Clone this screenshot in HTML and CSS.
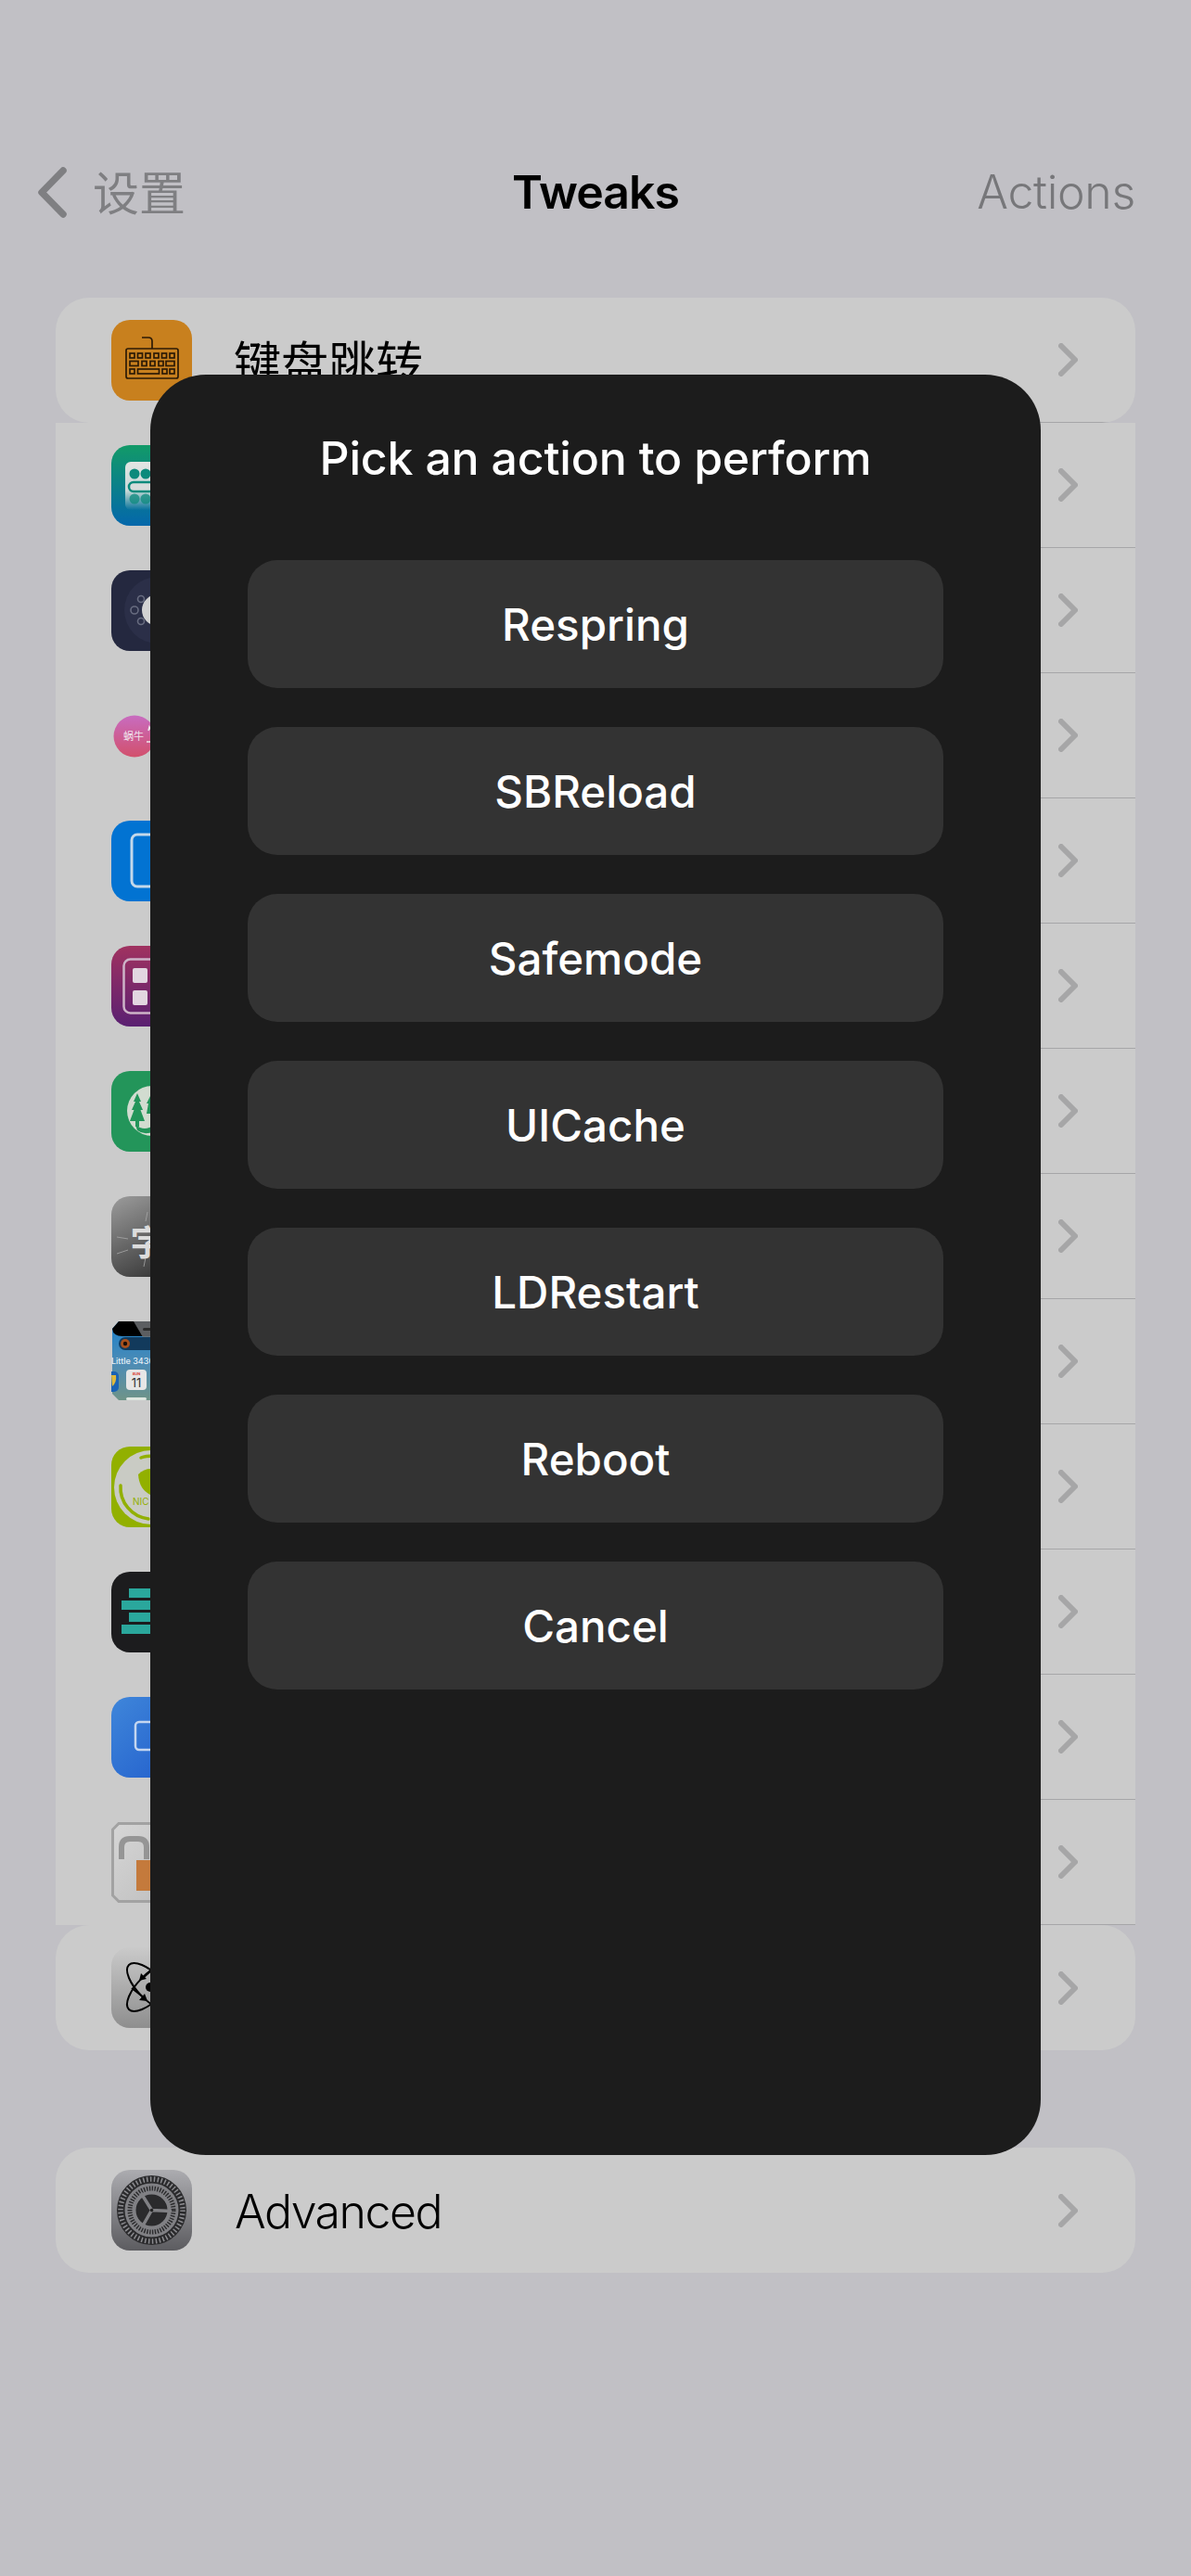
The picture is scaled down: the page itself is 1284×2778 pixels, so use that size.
FILE: index.html
```html
<!DOCTYPE html>
<html lang="zh">
<head>
  <meta charset="UTF-8" />
  <meta name="viewport" content="width=device-width, initial-scale=1.0"/>
  <title>Tweaks</title>
  <link rel="stylesheet" href="styles.css">
</head>
<body>

  <header class="nav">
    <div class="nav-back">
      <svg class="back-arrow" viewBox="0 0 33 57"><path d="M28 5 L5 28.500 L28 52" /></svg>
      <span class="nav-back-label">设置</span>
    </div>
    <h1 class="nav-title">Tweaks</h1>
    <div class="nav-action">Actions</div>
  </header>

  <main>
    <section class="group">

      <div class="row rounded">
        <svg class="icon" viewBox="0 0 87 87">
          <defs>
            <linearGradient id="g-teal" x1="0" y1="0" x2="0" y2="1"><stop offset="0" stop-color="#129a68"/><stop offset="1" stop-color="#0467ab"/></linearGradient>
            <linearGradient id="g-tile" x1="0" y1="0" x2="0" y2="1"><stop offset="0" stop-color="#e2e6e4"/><stop offset=".6" stop-color="#c8d8d8"/><stop offset="1" stop-color="#c8d8d8" stop-opacity="0"/></linearGradient>
            <linearGradient id="g-plum" x1="0" y1="0" x2="0" y2="1"><stop offset="0" stop-color="#a03260"/><stop offset="1" stop-color="#5a2072"/></linearGradient>
            <linearGradient id="g-snail" x1="0" y1="0" x2="0" y2="1"><stop offset="0" stop-color="#c86cc0"/><stop offset="1" stop-color="#d2506c"/></linearGradient>
            <linearGradient id="g-char" x1="0" y1="0" x2=".5" y2="1"><stop offset="0" stop-color="#9c9c9c"/><stop offset="1" stop-color="#3c3c3c"/></linearGradient>
            <linearGradient id="g-shot" x1="0" y1="0" x2="0" y2="1"><stop offset="0" stop-color="#1a80cc"/><stop offset=".55" stop-color="#4e8cb4"/><stop offset="1" stop-color="#6f9488"/></linearGradient>
            <linearGradient id="g-blue" x1="0" y1="0" x2="1" y2="1"><stop offset="0" stop-color="#3f86da"/><stop offset="1" stop-color="#205ccb"/></linearGradient>
            <linearGradient id="g-silver" x1="0" y1="0" x2="0" y2="1"><stop offset="0" stop-color="#cacaca"/><stop offset="1" stop-color="#8e8e8e"/></linearGradient>
            <linearGradient id="g-gear" x1="0" y1="0" x2="0" y2="1"><stop offset="0" stop-color="#acacb0"/><stop offset="1" stop-color="#5c5c60"/></linearGradient>
            <linearGradient id="g-lock" x1="0" y1="0" x2="1" y2="1"><stop offset="0" stop-color="#d6d6d6"/><stop offset="1" stop-color="#bcbcbc"/></linearGradient>
          </defs>
          <rect width="87" height="87" rx="20" fill="#c8801e"/>
          <g fill="none" stroke="#2c1a06" stroke-width="1.700">
            <path d="M33 19 H40 Q44 19 44 23 V31"/>
            <rect x="16" y="31" width="56" height="32" rx="2"/>
            <rect x="20" y="36" width="5" height="5"/><rect x="28.500" y="36" width="5" height="5"/><rect x="37" y="36" width="5" height="5"/><rect x="46" y="36" width="5" height="5"/><rect x="54.500" y="36" width="5" height="5"/><rect x="63" y="36" width="5" height="5"/>
            <rect x="20" y="44.500" width="9" height="5"/><rect x="33" y="44.500" width="5" height="5"/><rect x="42" y="44.500" width="5" height="5"/><rect x="51" y="44.500" width="5" height="5"/><rect x="59" y="44.500" width="9" height="5"/>
            <rect x="20" y="53" width="5" height="5"/><rect x="28.500" y="53" width="23" height="5"/><rect x="55" y="53" width="5" height="5"/><rect x="63" y="53" width="5" height="5"/>
          </g>
        </svg>
        <div class="row-body">
          <span class="row-label">键盘跳转</span>
          <svg class="chevron" viewBox="0 0 21 36"><path d="M3 3 L18 18 L3 33"/></svg>
        </div>
      </div>

      <div class="row">
        <svg class="icon" viewBox="0 0 87 87">
          <rect width="87" height="87" rx="20" fill="url(#g-teal)"/>
          <rect x="15" y="18" width="60" height="52" rx="6" fill="url(#g-tile)"/>
          <g fill="#0c8a7c">
            <circle cx="25" cy="31" r="5.500"/><circle cx="37" cy="31" r="5.500"/>
            <circle cx="25" cy="58" r="5.500" opacity=".75"/><circle cx="37" cy="58" r="5.500" opacity=".75"/>
          </g>
          <rect x="19" y="40" width="32" height="10" rx="5" fill="#d8dcdc" stroke="#0c8a7c" stroke-width="2.500"/>
        </svg>
        <div class="row-body"><svg class="chevron" viewBox="0 0 21 36"><path d="M3 3 L18 18 L3 33"/></svg></div>
      </div>

      <div class="row">
        <svg class="icon" viewBox="0 0 87 87">
          <rect width="87" height="87" rx="20" fill="#24283f"/>
          <circle cx="50" cy="43" r="36" fill="#2b2f48"/>
          <g fill="none" stroke="#686c80" stroke-width="1.600">
            <circle cx="25" cy="43" r="4"/><circle cx="32" cy="31" r="3.500"/><circle cx="32" cy="55" r="3.500"/>
          </g>
          <circle cx="50" cy="43" r="17" fill="#d2d2d2"/>
        </svg>
        <div class="row-body"><svg class="chevron" viewBox="0 0 21 36"><path d="M3 3 L18 18 L3 33"/></svg></div>
      </div>

      <div class="row">
        <svg class="icon" viewBox="0 0 87 87">
          <circle cx="25" cy="44" r="22.500" fill="url(#g-snail)"/>
          <text class="snail-text" x="24" y="48">蜗牛</text>
          <path d="M40 38 L41 34 L43 38 V50 H38" fill="none" stroke="#ececec" stroke-width="1.500"/>
        </svg>
        <div class="row-body"><svg class="chevron" viewBox="0 0 21 36"><path d="M3 3 L18 18 L3 33"/></svg></div>
      </div>

      <div class="row">
        <svg class="icon" viewBox="0 0 87 87">
          <rect width="87" height="87" rx="20" fill="#0273d2"/>
          <rect x="22" y="15" width="44" height="56" rx="6" fill="none" stroke="#c4d8ea" stroke-width="3"/>
        </svg>
        <div class="row-body"><svg class="chevron" viewBox="0 0 21 36"><path d="M3 3 L18 18 L3 33"/></svg></div>
      </div>

      <div class="row">
        <svg class="icon" viewBox="0 0 87 87">
          <rect width="87" height="87" rx="20" fill="url(#g-plum)"/>
          <rect x="13.500" y="14.500" width="60" height="58" rx="7" fill="none" stroke="#cdb4c8" stroke-width="2.500"/>
          <rect x="23" y="24" width="16" height="16" rx="2" fill="#e2d6e0"/>
          <rect x="23" y="48" width="16" height="16" rx="2" fill="#e2d6e0"/>
          <rect x="47" y="24" width="16" height="16" rx="2" fill="#e2d6e0"/>
          <rect x="47" y="48" width="16" height="16" rx="2" fill="#e2d6e0"/>
        </svg>
        <div class="row-body"><svg class="chevron" viewBox="0 0 21 36"><path d="M3 3 L18 18 L3 33"/></svg></div>
      </div>

      <div class="row">
        <svg class="icon" viewBox="0 0 87 87">
          <rect width="87" height="87" rx="20" fill="#23955a"/>
          <circle cx="44" cy="43" r="27" fill="#d2dcd0"/>
          <path d="M28 24 L32 33 L30 33 L34 42 L31.500 42 L36 54 L30 54 L30 60 L26 60 L26 54 L20 54 L24.500 42 L22 42 L26 33 L24 33 Z" fill="#23955a"/>
          <path d="M42 27 L46 35 L44 35 L48 46 L38 46 L40 35 L38 35 Z" fill="#23955a"/>
          <path d="M26 58 Q36 66 46 58 L46 65 Q36 70 28 64 Z" fill="#23955a"/>
        </svg>
        <div class="row-body"><svg class="chevron" viewBox="0 0 21 36"><path d="M3 3 L18 18 L3 33"/></svg></div>
      </div>

      <div class="row">
        <svg class="icon" viewBox="0 0 87 87">
          <rect width="87" height="87" rx="20" fill="url(#g-char)"/>
          <g stroke="#a8a8a8" stroke-width="1" opacity=".8">
            <line x1="6" y1="44" x2="18" y2="46"/><line x1="6" y1="62" x2="18" y2="58"/>
            <line x1="37" y1="27" x2="39" y2="17"/><line x1="35" y1="76" x2="37" y2="66"/>
          </g>
          <text class="char-text" x="39" y="64">字</text>
        </svg>
        <div class="row-body"><svg class="chevron" viewBox="0 0 21 36"><path d="M3 3 L18 18 L3 33"/></svg></div>
      </div>

      <div class="row">
        <svg class="icon" viewBox="0 0 87 87">
          <path d="M8 0 H79 L87 8 V78 L79 85 H8 L1 78 V8 Z" fill="url(#g-shot)"/>
          <path d="M1 8 L8 0 H58 V4 Q58 16 46 16 H12 Q2 16 1 8 Z" fill="#000"/>
          <path d="M24 0 H87 V34 H44 Z" fill="#6c6f72" opacity=".85"/>
          <rect x="34" y="7" width="20" height="3" rx="1.500" fill="#2a2a2a"/>
          <rect x="8" y="17" width="70" height="14" rx="7" fill="#123a5c"/>
          <circle cx="15" cy="24" r="5" fill="#a8501c"/>
          <circle cx="15" cy="24" r="2.200" fill="#1a0e08"/>
          <text class="shot-text" x="0" y="46">Little 3430</text>
          <rect x="-12" y="54" width="20" height="22" rx="5" fill="#1a62b4"/>
          <rect x="16" y="52" width="22" height="22" rx="4" fill="#e6e6e6"/>
          <text class="shot-sun" x="27" y="58">SUN</text>
          <text class="shot-day" x="27" y="71">11</text>
          <rect x="16" y="82" width="22" height="3" rx="1.500" fill="#dfe7e0"/>
          <path d="M0 58 L5 58 Q6 66 1 70 Z" fill="#e0b93c"/>
        </svg>
        <div class="row-body"><svg class="chevron" viewBox="0 0 21 36"><path d="M3 3 L18 18 L3 33"/></svg></div>
      </div>

      <div class="row">
        <svg class="icon" viewBox="0 0 87 87">
          <rect width="87" height="87" rx="20" fill="#92b000"/>
          <circle cx="43" cy="44" r="40" fill="#c9cbc4"/>
          <path d="M10 42 A34 34 0 0 0 40 78" fill="none" stroke="#92b000" stroke-width="3.500" stroke-linecap="round"/>
          <path d="M32 12 Q37 10 46 10" fill="none" stroke="#92b000" stroke-width="3.500" stroke-linecap="round"/>
          <path d="M29 30 Q40 20 52 27 Q54 44 42 52 Q30 46 29 30 Z" fill="#92b000"/>
          <text class="nic-text" x="23" y="63">NIC</text>
        </svg>
        <div class="row-body"><svg class="chevron" viewBox="0 0 21 36"><path d="M3 3 L18 18 L3 33"/></svg></div>
      </div>

      <div class="row">
        <svg class="icon" viewBox="0 0 87 87">
          <rect width="87" height="87" rx="20" fill="#1c1c1e"/>
          <g fill="#2aa79c">
            <rect x="19" y="18" width="50" height="10"/>
            <rect x="11" y="31" width="66" height="10"/>
            <rect x="19" y="44" width="50" height="10"/>
            <rect x="11" y="57" width="66" height="10"/>
          </g>
        </svg>
        <div class="row-body"><svg class="chevron" viewBox="0 0 21 36"><path d="M3 3 L18 18 L3 33"/></svg></div>
      </div>

      <div class="row">
        <svg class="icon" viewBox="0 0 87 87">
          <rect width="87" height="87" rx="20" fill="url(#g-blue)"/>
          <rect x="26" y="27" width="36" height="30" rx="4" fill="none" stroke="#c4d6f0" stroke-width="2.500"/>
        </svg>
        <div class="row-body"><svg class="chevron" viewBox="0 0 21 36"><path d="M3 3 L18 18 L3 33"/></svg></div>
      </div>

      <div class="row">
        <svg class="icon" viewBox="0 0 87 87">
          <path d="M8 1.500 H79 L85.500 8 V79 L79 85.500 H8 L1.500 79 V8 Z" fill="url(#g-lock)" stroke="#a2a2a2" stroke-width="3"/>
          <path d="M11 40 V27 Q11 18 20 18 H29 Q38 18 38 27 V40" fill="none" stroke="#959595" stroke-width="6"/>
          <rect x="27" y="41" width="34" height="33" fill="#c47a3c"/>
        </svg>
        <div class="row-body"><svg class="chevron" viewBox="0 0 21 36"><path d="M3 3 L18 18 L3 33"/></svg></div>
      </div>

      <div class="row rounded">
        <svg class="icon" viewBox="0 0 87 87">
          <rect width="87" height="87" rx="20" fill="url(#g-silver)"/>
          <g fill="none" stroke="#000" stroke-width="2">
            <ellipse cx="43" cy="43" rx="34" ry="14" transform="rotate(45 43 43)"/>
            <ellipse cx="43" cy="43" rx="34" ry="14" transform="rotate(-45 43 43)"/>
            <path d="M22 44 L36 55"/>
            <path d="M42 26 L33 34"/>
          </g>
          <path d="M39 58 L30 57 L36 50 Z M30 36 L38 34 L32 28 Z"/>
          <circle cx="42" cy="43" r="5"/>
        </svg>
        <div class="row-body no-line"><svg class="chevron" viewBox="0 0 21 36"><path d="M3 3 L18 18 L3 33"/></svg></div>
      </div>

    </section>

    <section class="group group-advanced">
      <div class="row rounded">
        <svg class="icon" viewBox="0 0 87 87">
          <rect width="87" height="87" rx="20" fill="url(#g-gear)"/>
          <circle cx="43.500" cy="43.500" r="37.500" fill="#2a2a2c"/>
          <circle cx="43.500" cy="43.500" r="33.500" fill="none" stroke="#8c8c90" stroke-width="5.500" stroke-dasharray="1.500 2.400"/>
          <circle cx="43.500" cy="43.500" r="23" fill="none" stroke="#808084" stroke-width="12"/>
          <circle cx="43.500" cy="43.500" r="23.500" fill="none" stroke="#2a2a2c" stroke-width="5" stroke-dasharray="1.400 1.500"/>
          <circle cx="43.500" cy="43.500" r="16.500" fill="#2a2a2c"/>
          <path d="M43.500 43.500 L32 25 M43.500 43.500 L65 44.500 M43.500 43.500 L33 62" stroke="#808084" stroke-width="3.500"/>
          <circle cx="43.500" cy="43.500" r="1.800" fill="#222"/>
        </svg>
        <div class="row-body no-line">
          <span class="row-label label-latin">Advanced</span>
          <svg class="chevron" viewBox="0 0 21 36"><path d="M3 3 L18 18 L3 33"/></svg>
        </div>
      </div>
    </section>
  </main>

  <div class="sheet">
    <h2 class="sheet-title">Pick an action to perform</h2>
    <div class="sheet-actions">
      <button type="button">Respring</button>
      <button type="button">SBReload</button>
      <button type="button">Safemode</button>
      <button type="button">UICache</button>
      <button type="button">LDRestart</button>
      <button type="button">Reboot</button>
      <button type="button">Cancel</button>
    </div>
  </div>

</body>
</html>
```

FILE: styles.css
```css
html, body {
  margin: 0;
  padding: 0;
}
body {
  width: 1284px;
  height: 2778px;
  position: relative;
  overflow: hidden;
  background-color: #c1c0c5;
  font-family: Inter, "Noto Sans CJK SC", sans-serif;
  color: #000;
}

/* nav bar */
.nav {
  display: grid;
  grid-template-columns: 1fr auto 1fr;
  align-items: center;
  height: 130px;
  margin-top: 142px;
  padding: 0 60px;
}
.nav-back {
  display: flex;
  align-items: center;
  gap: 27px;
  margin-left: -20px;
  color: #7f7f82;
  font-family: "Noto Sans CJK SC", sans-serif;
  font-size: 50px;
}
.nav-back-label {
  line-height: 57px;
  margin-top: -4px;
}
.back-arrow {
  width: 33px;
  height: 57px;
}
.back-arrow path {
  fill: none;
  stroke: #7f7f82;
  stroke-width: 7.500;
  stroke-linecap: round;
  stroke-linejoin: round;
}
.nav-title {
  margin: 0;
  font-size: 50px;
  font-weight: 600;
  letter-spacing: -1px;
  text-align: center;
}
.nav-action {
  text-align: right;
  color: #77777a;
  font-size: 50px;
  font-weight: 300;
  letter-spacing: -0.3px;
}

/* list */
.group {
  margin: 49px 60px 0;
}
.group-advanced {
  margin-top: 105px;
}
.row {
  display: flex;
  align-items: center;
  height: 135px;
  padding-left: 60px;
  background-color: #cbcbcb;
  overflow: hidden;
}
.rounded {
  border-radius: 36px;
}
.icon {
  flex: none;
  width: 87px;
  height: 87px;
}
.row-body {
  flex: 1;
  display: flex;
  align-items: center;
  justify-content: space-between;
  box-sizing: border-box;
  height: 135px;
  margin-left: 46px;
  padding-right: 62px;
  border-bottom: 1px solid #a6a6a8;
}
.no-line {
  border-bottom: none;
}
.row-label {
  padding-top: 2px;
  margin-left: -1px;
  font-size: 51px;
  font-weight: 400;
}
.label-latin {
  padding-top: 3px;
  margin-left: 0;
  font-size: 50px;
  font-weight: 350;
  letter-spacing: -1.500px;
}
.chevron {
  flex: none;
  width: 21px;
  height: 36px;
  margin-left: auto;
}
.chevron path {
  fill: none;
  stroke: #a6a6a7;
  stroke-width: 6;
  stroke-linecap: round;
  stroke-linejoin: round;
}

/* text inside the app icons */
.snail-text {
  font-family: "Noto Sans CJK SC", sans-serif;
  font-size: 11px;
  fill: #f0e4ee;
  text-anchor: middle;
}
.char-text {
  font-family: "Noto Sans CJK SC", sans-serif;
  font-size: 37px;
  font-weight: 700;
  fill: #dcdcdc;
  text-anchor: middle;
}
.shot-text {
  font-size: 9px;
  font-weight: 500;
  fill: #e8f0f6;
}
.shot-sun {
  font-size: 4px;
  font-weight: 700;
  fill: #d83a30;
  text-anchor: middle;
}
.shot-day {
  font-size: 13px;
  fill: #333;
  text-anchor: middle;
}
.nic-text {
  font-size: 10px;
  fill: #92b000;
}

/* action sheet */
.sheet {
  position: absolute;
  top: 404px;
  left: 162px;
  width: 960px;
  height: 1920px;
  box-sizing: border-box;
  padding: 60px 105px 0;
  background-color: #1c1c1c;
  border-radius: 60px;
  color: #fff;
}
.sheet-title {
  margin: 0 -60px 80px;
  font-size: 50px;
  font-weight: 550;
  letter-spacing: -0.2px;
  line-height: 60px;
  text-align: center;
}
.sheet-actions {
  display: flex;
  flex-direction: column;
  gap: 42px;
}
.sheet-actions button {
  height: 138px;
  padding: 0;
  border: none;
  border-radius: 32px;
  background-color: #333333;
  color: #fff;
  font-family: inherit;
  font-size: 47.500px;
  font-weight: 550;
}
```
